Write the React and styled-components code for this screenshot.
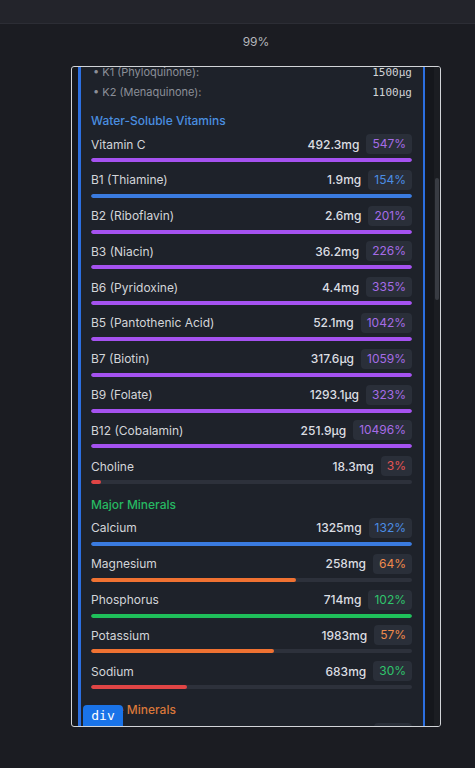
import styled, { createGlobalStyle } from "styled-components";

const GlobalStyle = createGlobalStyle`
html, body {
  margin: 0;
  padding: 0;
  background: #1b1c22;
  font-family: Inter, "Noto Sans", "Liberation Sans", sans-serif;
}
`;

const TopBar = styled.div`
height: 23px;
background: #23242b;
border-bottom: 1px solid #2c2d35;
`;

const Stage = styled.div`
display: flex;
flex-direction: column;
align-items: center;
padding-left: 37px;
`;

const Zoom = styled.div`
margin-top: 11px;
height: 14px;
line-height: 14px;
font-size: 12px;
color: #b4b6bb;
`;

const Frame = styled.div`
position: relative;
margin-top: 17px;
width: 368px;
height: 659px;
border: 1px solid #d2d4d8;
border-radius: 3px;
background: #15171c;
display: flex;
overflow: hidden;
`;

const Gutter = styled.div`
width: 6px;
flex-shrink: 0;
`;

const Panel = styled.div`
flex: 1;
background: #1e222a;
border-left: 3px solid #2c6fe0;
border-right: 2px solid #2c6fe0;
overflow: hidden;
`;

const Content = styled.div`
margin-top: -5px;
padding: 0 11px 0 10px;
`;

const ScrollSide = styled.div`
width: 15px;
flex-shrink: 0;
display: flex;
justify-content: flex-end;
`;

const Track = styled.div`
width: 6px;
background: #1b1d22;
padding-top: 111px;
display: flex;
justify-content: center;
`;

const Thumb = styled.div`
width: 4px;
height: 122px;
border-radius: 2px;
background: #383b42;
`;

const SubList = styled.div`
margin-bottom: 6px;
`;

const SubRow = styled.div`
display: flex;
justify-content: space-between;
align-items: center;
height: 20px;
font-size: 11px;
color: #8b8f98;
padding-left: 2px;
`;

const Mono = styled.span`
font-family: "DejaVu Sans Mono", "Liberation Mono", monospace;
font-size: 11px;
color: #d0d2d6;
`;

const SectionTitle = styled.div`
padding-top: 6px;
margin-bottom: 6px;
height: 14px;
line-height: 14px;
font-size: 12px;
font-weight: 500;
color: ${(p) => p.$color};
`;

const Row = styled.div`
margin-bottom: 7.8px;
`;

const RowHead = styled.div`
display: flex;
align-items: center;
height: 20px;
`;

const Label = styled.span`
flex: 1;
font-size: 12px;
color: #d3d5d9;
`;

const Amount = styled.span`
font-size: 12px;
font-weight: 500;
color: #dcdee2;
margin-right: 7px;
`;

const Badge = styled.span`
height: 20px;
line-height: 20px;
padding: 0 6px;
border-radius: 4px;
background: #2a2f39;
font-size: 12px;
color: ${(p) => p.$color};
`;

const Bar = styled.div`
margin-top: 4px;
height: 4px;
border-radius: 2px;
background: #2d313b;
overflow: hidden;
`;

const Fill = styled.div`
height: 100%;
border-radius: 2px;
background: ${(p) => p.$color};
`;

const Tag = styled.div`
position: absolute;
left: 11px;
bottom: 0;
width: 40px;
height: 21px;
line-height: 21px;
text-align: center;
border-radius: 4px 4px 0 0;
background: #1a73e8;
color: #fff;
font-family: "DejaVu Sans Mono", "Liberation Mono", monospace;
font-size: 13px;
`;

const C = {
  purple: "#a552f0",
  blue: "#3a7be0",
  red: "#e04545",
  orange: "#f07232",
  green: "#1fbf5a",
};

const T = {
  purple: "#a66ce6",
  blue: "#4b8de4",
  red: "#e45454",
  orange: "#ef8a4c",
  green: "#2fc46c",
};

const water = [
  ["Vitamin C", "492.3mg", "547%", "purple", "purple", 100],
  ["B1 (Thiamine)", "1.9mg", "154%", "blue", "blue", 100],
  ["B2 (Riboflavin)", "2.6mg", "201%", "purple", "purple", 100],
  ["B3 (Niacin)", "36.2mg", "226%", "purple", "purple", 100],
  ["B6 (Pyridoxine)", "4.4mg", "335%", "purple", "purple", 100],
  ["B5 (Pantothenic Acid)", "52.1mg", "1042%", "purple", "purple", 100],
  ["B7 (Biotin)", "317.6μg", "1059%", "purple", "purple", 100],
  ["B9 (Folate)", "1293.1μg", "323%", "purple", "purple", 100],
  ["B12 (Cobalamin)", "251.9μg", "10496%", "purple", "purple", 100],
  ["Choline", "18.3mg", "3%", "red", "red", 3],
];

const major = [
  ["Calcium", "1325mg", "132%", "blue", "blue", 100],
  ["Magnesium", "258mg", "64%", "orange", "orange", 64],
  ["Phosphorus", "714mg", "102%", "green", "green", 100],
  ["Potassium", "1983mg", "57%", "orange", "orange", 57],
  ["Sodium", "683mg", "30%", "green", "red", 30],
];

const trace = [["Iron", "14.2mg", "79%", "orange", "orange", 79]];

const NutrientRow = ({ item }) => {
  const [name, amount, pct, badge, bar, fill] = item;
  return (
    <Row>
      <RowHead>
        <Label>{name}</Label>
        <Amount>{amount}</Amount>
        <Badge $color={T[badge]}>{pct}</Badge>
      </RowHead>
      <Bar>
        <Fill $color={C[bar]} style={{ width: fill + "%" }} />
      </Bar>
    </Row>
  );
};

const App = () => {
  return (
    <>
      <GlobalStyle />
      <TopBar />
      <Stage>
        <Zoom>99%</Zoom>
        <Frame>
          <Gutter />
          <Panel>
            <Content>
              <SubList>
                <SubRow>
                  <span>• K1 (Phyloquinone):</span>
                  <Mono>1500μg</Mono>
                </SubRow>
                <SubRow>
                  <span>• K2 (Menaquinone):</span>
                  <Mono>1100μg</Mono>
                </SubRow>
              </SubList>
              <SectionTitle $color="#4a8fe0">Water-Soluble Vitamins</SectionTitle>
              {water.map((r) => (
                <NutrientRow key={r[0]} item={r} />
              ))}
              <SectionTitle $color="#27b862">Major Minerals</SectionTitle>
              {major.map((r) => (
                <NutrientRow key={r[0]} item={r} />
              ))}
              <SectionTitle $color="#d9773a">Trace Minerals</SectionTitle>
              {trace.map((r) => (
                <NutrientRow key={r[0]} item={r} />
              ))}
            </Content>
          </Panel>
          <ScrollSide>
            <Track>
              <Thumb />
            </Track>
          </ScrollSide>
          <Tag>div</Tag>
        </Frame>
      </Stage>
    </>
  );
};

export default App;
